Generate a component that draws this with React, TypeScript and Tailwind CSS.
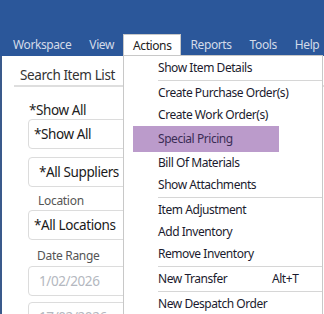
const MENU_BAR = ['Workspace', 'View', 'Actions', 'Reports', 'Tools', 'Help']

type MenuEntry = { label: string; shortcut?: string; active?: boolean } | 'sep'

const ACTIONS: MenuEntry[] = [
  { label: 'Show Item Details' },
  'sep',
  { label: 'Create Purchase Order(s)' },
  { label: 'Create Work Order(s)' },
  { label: 'Special Pricing', active: true },
  { label: 'Bill Of Materials' },
  { label: 'Show Attachments' },
  'sep',
  { label: 'Item Adjustment' },
  { label: 'Add Inventory' },
  { label: 'Remove Inventory' },
  'sep',
  { label: 'New Transfer', shortcut: 'Alt+T' },
  'sep',
  { label: 'New Despatch Order' },
]

function Field({ value, muted, indent }: { value: string; muted?: boolean; indent?: boolean }) {
  return (
    <div
      className={`h-[30px] w-[140px] rounded-[4px] border border-[#dcdcdc] bg-white flex items-center text-[13.5px] tracking-[-0.4px] whitespace-nowrap ${
        indent ? 'pl-[10px]' : 'pl-[5px]'
      } ${muted ? 'text-[#b4b8c0] h-[29px]' : 'text-[#1a1a1a]'}`}
    >
      {value}
    </div>
  )
}

export default function App() {
  return (
    <div className="relative w-[324px] h-[314px] overflow-hidden bg-white font-['Noto_Sans',sans-serif]">
      {/* title / menu bar */}
      <div className="h-[56px] bg-[#2b579a] flex flex-col justify-end">
        <div className="flex pl-[4px] h-[22px] text-[12px] tracking-[-0.4px]">
          {MENU_BAR.map((m) =>
            m === 'Actions' ? (
              <div
                key={m}
                className="px-[9px] flex items-center bg-white text-[#222] border border-b-0 border-[#c8c8c8]"
              >
                {m}
              </div>
            ) : (
              <div key={m} className="px-[9px] flex items-center text-[#d3dbe9]">
                {m}
              </div>
            )
          )}
        </div>
      </div>

      {/* left panel */}
      <div className="h-[258px] border-l-2 border-[#3a5a8c] pl-[12px]">
        <div className="pt-[9px] pl-[6px] text-[13.5px] tracking-[-0.4px] text-[#333] h-[31px] border-b-2 border-[#dedede] whitespace-nowrap">
          Search Item List
        </div>
        <div className="pl-[14px] pt-[14px] flex flex-col">
          <div className="text-[13.5px] tracking-[-0.4px] text-[#222] leading-[18px] pl-[1px]">*Show All</div>
          <div>
            <Field value="*Show All" />
          </div>
          <div className="mt-[8px]">
            <Field value="*All Suppliers" indent />
          </div>
          <div className="mt-[6px] pl-[10px] text-[12px] tracking-[-0.3px] text-[#555] leading-[16px]">Location</div>
          <div className="mt-[1px]">
            <Field value="*All Locations" />
          </div>
          <div className="mt-[8px] pl-[9px] text-[12px] tracking-[-0.3px] text-[#555] leading-[16px]">Date Range</div>
          <div className="mt-[2px]">
            <Field value="1/02/2026" muted indent />
          </div>
          <div className="mt-[6px]">
            <Field value="17/02/2026" muted indent />
          </div>
        </div>
      </div>

      {/* actions dropdown */}
      <div className="absolute left-[123px] top-[55px] w-[200px] h-[270px] bg-white border border-[#c8c8c8] text-[12px] tracking-[-0.45px] text-[#1b1b2e] pt-[1px]">
        {ACTIONS.map((e, i) =>
          e === 'sep' ? (
            <div key={i} className="ml-[34px] h-[1px] bg-[#d6d6d6] my-[1px]" />
          ) : (
            <div key={i} className={`${e.active ? 'h-[26px]' : 'h-[22px]'} flex items-center px-[9px]`}>
              <div
                className={`h-full flex items-center pl-[25px] ${
                  e.active ? 'bg-[#bb9bcb] text-[#3a2c55] w-[146px]' : 'w-full'
                }`}
              >
                <span className="w-[114px] whitespace-nowrap">{e.label}</span>
                {e.shortcut && <span>{e.shortcut}</span>}
              </div>
            </div>
          )
        )}
      </div>
    </div>
  )
}
